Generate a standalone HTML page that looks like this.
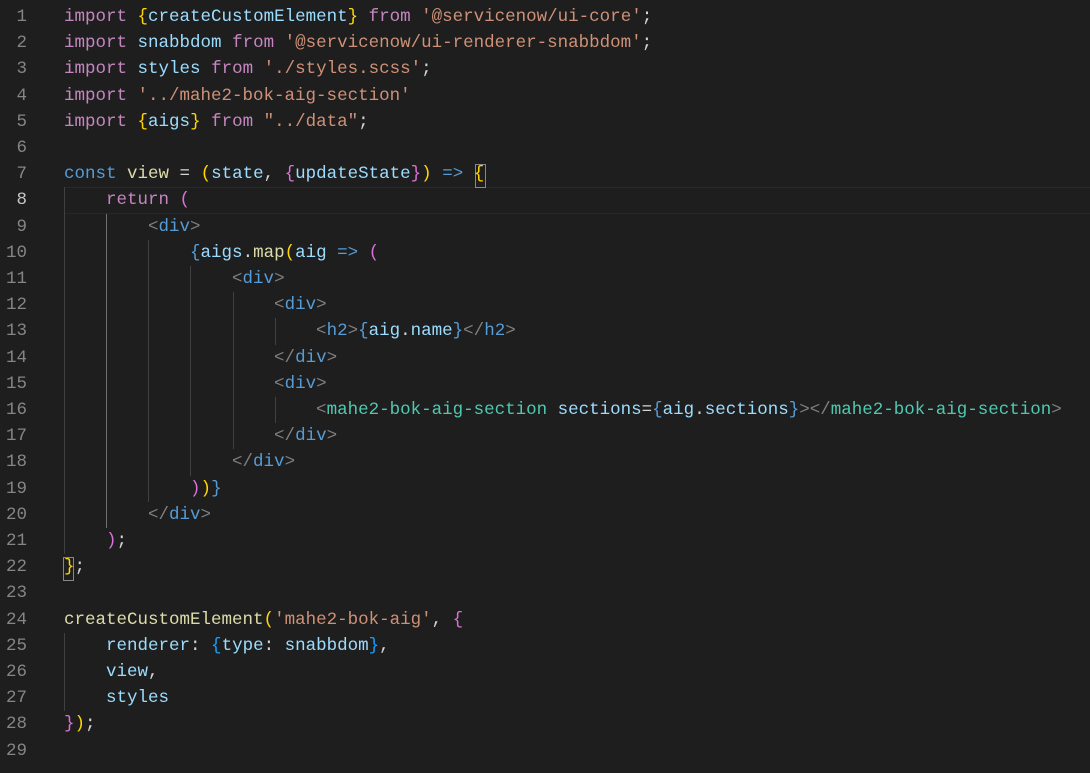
<!DOCTYPE html>
<html><head><meta charset="utf-8"><style>
html,body{margin:0;padding:0;background:#1e1e1e;width:1090px;height:773px;overflow:hidden}
.ed{position:relative;width:1090px;height:773px;font-family:"Liberation Mono","DejaVu Sans Mono",monospace;font-size:17.5px}
.ln{position:absolute;left:0;width:27px;text-align:right;color:#858585;height:26.2px;line-height:26.2px}
.ln.a{color:#c6c6c6}
.cl{position:absolute;left:64px;white-space:pre;color:#d4d4d4;height:26.2px;line-height:26.2px}
.g{position:absolute;width:1px;background:#404040}
.k{color:#c586c0}.v{color:#9cdcfe}.s{color:#ce9178}.c{color:#569cd6}.f{color:#dcdcaa}
.b1{color:#ffd700}.b2{color:#da70d6}.b3{color:#179fff}.t{color:#808080}.tg{color:#569cd6}.cp{color:#4ec9b0}.jb{color:#569cd6}
</style></head><body><div class="ed">
<div style="position:absolute;left:64px;right:0;top:187px;height:25px;border-top:1px solid #282828;border-bottom:1px solid #282828;border-left:1px solid #282828"></div>
<!-- indent guides -->
<div class="g" style="left:64px;top:187.4px;height:366.8px"></div>
<div class="g" style="left:106px;top:213.6px;height:314.4px;background:#707070"></div>
<div class="g" style="left:148px;top:239.8px;height:262px"></div>
<div class="g" style="left:190px;top:266px;height:209.6px"></div>
<div class="g" style="left:233px;top:292.2px;height:157.2px"></div>
<div class="g" style="left:275px;top:318.4px;height:26.2px"></div>
<div class="g" style="left:275px;top:397px;height:26.2px"></div>
<div class="g" style="left:64px;top:632.8px;height:78.6px"></div>
<div style="position:absolute;left:63px;top:557px;width:9px;height:22px;border:1px solid #888"></div>
<div style="position:absolute;left:475px;top:164px;width:9px;height:22px;border:1px solid #888"></div>

<div class="ln" style="top:4px">1</div><div class="cl" style="top:4px"><span class="k">import</span> <span class="b1">{</span><span class="v">createCustomElement</span><span class="b1">}</span> <span class="k">from</span> <span class="s">'@servicenow/ui-core'</span>;</div>
<div class="ln" style="top:30.2px">2</div><div class="cl" style="top:30.2px"><span class="k">import</span> <span class="v">snabbdom</span> <span class="k">from</span> <span class="s">'@servicenow/ui-renderer-snabbdom'</span>;</div>
<div class="ln" style="top:56.4px">3</div><div class="cl" style="top:56.4px"><span class="k">import</span> <span class="v">styles</span> <span class="k">from</span> <span class="s">'./styles.scss'</span>;</div>
<div class="ln" style="top:82.6px">4</div><div class="cl" style="top:82.6px"><span class="k">import</span> <span class="s">'../mahe2-bok-aig-section'</span></div>
<div class="ln" style="top:108.8px">5</div><div class="cl" style="top:108.8px"><span class="k">import</span> <span class="b1">{</span><span class="v">aigs</span><span class="b1">}</span> <span class="k">from</span> <span class="s">"../data"</span>;</div>
<div class="ln" style="top:135px">6</div>
<div class="ln" style="top:161.2px">7</div><div class="cl" style="top:161.2px"><span class="c">const</span> <span class="f">view</span> = <span class="b1">(</span><span class="v">state</span>, <span class="b2">{</span><span class="v">updateState</span><span class="b2">}</span><span class="b1">)</span> <span class="c">=&gt;</span> <span class="b1">{</span></div>
<div class="ln a" style="top:187.4px">8</div><div class="cl" style="top:187.4px">    <span class="k">return</span> <span class="b2">(</span></div>
<div class="ln" style="top:213.6px">9</div><div class="cl" style="top:213.6px">        <span class="t">&lt;</span><span class="tg">div</span><span class="t">&gt;</span></div>
<div class="ln" style="top:239.8px">10</div><div class="cl" style="top:239.8px">            <span class="jb">{</span><span class="v">aigs</span>.<span class="f">map</span><span class="b1">(</span><span class="v">aig</span> <span class="c">=&gt;</span> <span class="b2">(</span></div>
<div class="ln" style="top:266px">11</div><div class="cl" style="top:266px">                <span class="t">&lt;</span><span class="tg">div</span><span class="t">&gt;</span></div>
<div class="ln" style="top:292.2px">12</div><div class="cl" style="top:292.2px">                    <span class="t">&lt;</span><span class="tg">div</span><span class="t">&gt;</span></div>
<div class="ln" style="top:318.4px">13</div><div class="cl" style="top:318.4px">                        <span class="t">&lt;</span><span class="tg">h2</span><span class="t">&gt;</span><span class="jb">{</span><span class="v">aig</span>.<span class="v">name</span><span class="jb">}</span><span class="t">&lt;/</span><span class="tg">h2</span><span class="t">&gt;</span></div>
<div class="ln" style="top:344.6px">14</div><div class="cl" style="top:344.6px">                    <span class="t">&lt;/</span><span class="tg">div</span><span class="t">&gt;</span></div>
<div class="ln" style="top:370.8px">15</div><div class="cl" style="top:370.8px">                    <span class="t">&lt;</span><span class="tg">div</span><span class="t">&gt;</span></div>
<div class="ln" style="top:397px">16</div><div class="cl" style="top:397px">                        <span class="t">&lt;</span><span class="cp">mahe2-bok-aig-section</span> <span class="v">sections</span>=<span class="jb">{</span><span class="v">aig</span>.<span class="v">sections</span><span class="jb">}</span><span class="t">&gt;&lt;/</span><span class="cp">mahe2-bok-aig-section</span><span class="t">&gt;</span></div>
<div class="ln" style="top:423.2px">17</div><div class="cl" style="top:423.2px">                    <span class="t">&lt;/</span><span class="tg">div</span><span class="t">&gt;</span></div>
<div class="ln" style="top:449.4px">18</div><div class="cl" style="top:449.4px">                <span class="t">&lt;/</span><span class="tg">div</span><span class="t">&gt;</span></div>
<div class="ln" style="top:475.6px">19</div><div class="cl" style="top:475.6px">            <span class="b2">)</span><span class="b1">)</span><span class="jb">}</span></div>
<div class="ln" style="top:501.8px">20</div><div class="cl" style="top:501.8px">        <span class="t">&lt;/</span><span class="tg">div</span><span class="t">&gt;</span></div>
<div class="ln" style="top:528px">21</div><div class="cl" style="top:528px">    <span class="b2">)</span>;</div>
<div class="ln" style="top:554.2px">22</div><div class="cl" style="top:554.2px"><span class="b1">}</span>;</div>
<div class="ln" style="top:580.4px">23</div>
<div class="ln" style="top:606.6px">24</div><div class="cl" style="top:606.6px"><span class="f">createCustomElement</span><span class="b1">(</span><span class="s">'mahe2-bok-aig'</span>, <span class="b2">{</span></div>
<div class="ln" style="top:632.8px">25</div><div class="cl" style="top:632.8px">    <span class="v">renderer</span>: <span class="b3">{</span><span class="v">type</span>: <span class="v">snabbdom</span><span class="b3">}</span>,</div>
<div class="ln" style="top:659px">26</div><div class="cl" style="top:659px">    <span class="v">view</span>,</div>
<div class="ln" style="top:685.2px">27</div><div class="cl" style="top:685.2px">    <span class="v">styles</span></div>
<div class="ln" style="top:711.4px">28</div><div class="cl" style="top:711.4px"><span class="b2">}</span><span class="b1">)</span>;</div>
<div class="ln" style="top:737.6px">29</div>
</div></body></html>
